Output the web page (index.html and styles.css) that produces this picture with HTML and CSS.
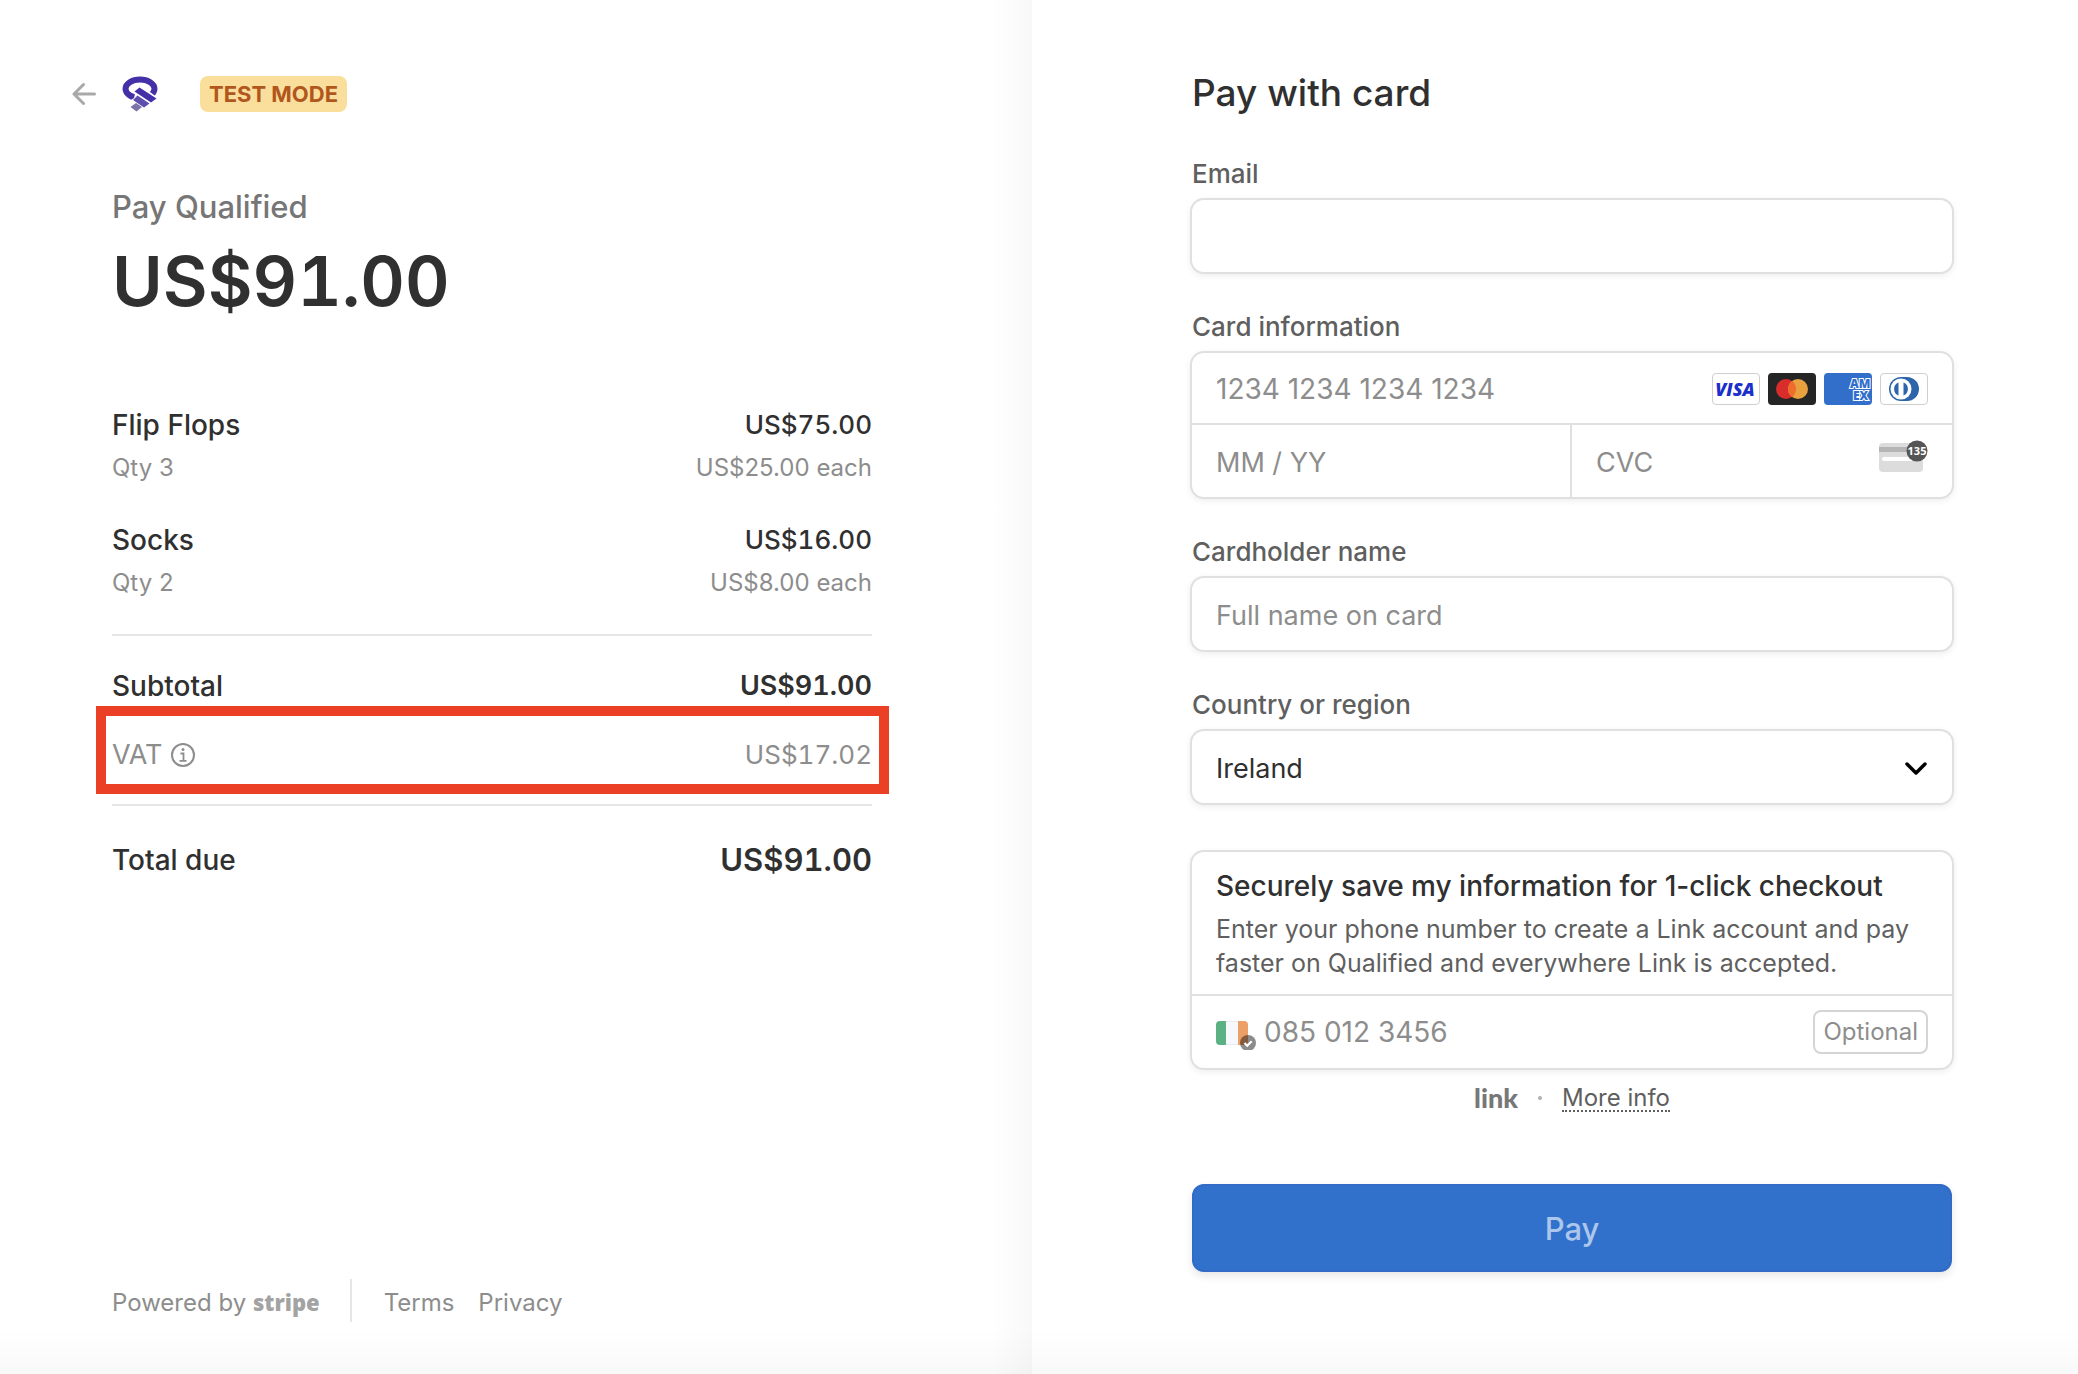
FILE: index.html
```html
<!DOCTYPE html>
<html lang="en">
<head>
    <meta charset="utf-8" />
    <meta name="viewport" content="width=device-width, initial-scale=1.0" />
    <title>Qualified - Checkout</title>
    <link rel="stylesheet" href="styles.css">
</head>
<body>
    <div class="checkout">
        <!-- Order summary -->
        <section class="summary">
            <header class="summary-header">
                <a href="#" class="back-link" aria-label="Back">
                    <svg width="24" height="24" viewBox="0 0 24 24" fill="none" stroke="#a9a9a9" stroke-width="3" stroke-linecap="round" stroke-linejoin="round">
                        <path d="M22.500 12H2M11.500 2.500L2 12l9.500 9.500" />
                    </svg>
                </a>
                <svg class="brand" width="36" height="36" viewBox="0 0 36 36">
                    <ellipse cx="18" cy="12.800" rx="14.500" ry="9.300" fill="none" stroke="#4530a8" stroke-width="6" />
                    <path d="M12 22L15 10L20 10L36 22L36 38H4L9 24z" fill="#fff" />
                    <path d="M12.500 15.500L17.500 11.500L34.500 22.500L29 26.500z" fill="#4530a8" />
                    <path d="M11 24L15.500 19.500L27.500 27.500L22 31.500z" fill="#5e4fae" />
                    <path d="M8.500 31L14 27L20 31L14.500 35.500z" fill="#7c74a8" />
                </svg>
                <span class="test-badge">TEST MODE</span>
            </header>

            <div class="pay-to">Pay Qualified</div>
            <div class="amount">US$91.00</div>

            <ul class="items">
                <li class="item">
                    <div class="row"><span>Flip Flops</span><span class="price">US$75.00</span></div>
                    <div class="row row-sub"><span>Qty 3</span><span>US$25.00 each</span></div>
                </li>
                <li class="item">
                    <div class="row"><span>Socks</span><span class="price">US$16.00</span></div>
                    <div class="row row-sub"><span>Qty 2</span><span>US$8.00 each</span></div>
                </li>
            </ul>

            <div class="totals">
                <div class="row"><span>Subtotal</span><span class="price strong">US$91.00</span></div>
                <div class="row row-vat">
                    <span class="vat-label">VAT
                        <svg width="24" height="24" viewBox="0 0 24 24" fill="none" stroke="#8d8d8d" stroke-width="2">
                            <circle cx="12" cy="12" r="11" />
                            <path d="M9.500 10.500h3v7M8.500 17.800h7" stroke-width="1.800" />
                            <circle cx="12" cy="6.500" r="1.500" fill="#8d8d8d" stroke="none" />
                        </svg>
                    </span>
                    <span class="price">US$17.02</span>
                </div>
            </div>
            <div class="row row-total"><span>Total due</span><span class="total">US$91.00</span></div>

            <footer class="footer">
                <a href="#" class="powered">Powered by <b class="stripe">stripe</b></a>
                <nav class="footer-links">
                    <a href="#">Terms</a>
                    <a href="#">Privacy</a>
                </nav>
            </footer>
        </section>

        <!-- Payment form -->
        <main class="payment">
            <h1>Pay with card</h1>
            <form>
                <div class="form-group">
                    <label for="email">Email</label>
                    <div class="box"><input type="email" id="email" name="email"></div>
                </div>

                <div class="form-group">
                    <label for="cardNumber">Card information</label>
                    <div class="box">
                        <div class="field card-number">
                            <input type="text" id="cardNumber" class="digits" placeholder="1234 1234 1234 1234">
                            <div class="card-brands">
                                <svg width="48" height="32" viewBox="0 0 48 32">
                                    <rect x="0.500" y="0.500" width="47" height="31" rx="3.500" fill="#fff" stroke="#cfcfcf" />
                                    <text x="23" y="23" text-anchor="middle" font-family="Open Sans" font-size="18" font-weight="800" font-style="italic" fill="#1a2fcb">VISA</text>
                                </svg>
                                <svg width="48" height="32" viewBox="0 0 48 32">
                                    <rect width="48" height="32" rx="4" fill="#252525" />
                                    <circle cx="18" cy="16" r="10" fill="#d92d2b" />
                                    <circle cx="30" cy="16" r="10" fill="#e9a13f" />
                                    <path d="M24 8a10 10 0 0 1 0 16a10 10 0 0 1 0-16z" fill="#ee6c2d" />
                                </svg>
                                <svg width="48" height="32" viewBox="0 0 48 32">
                                    <rect width="48" height="32" rx="4" fill="#316fcb" />
                                    <g font-family="Open Sans" font-size="12" font-weight="800" fill="#316fcb" stroke="#fff" stroke-width="2" paint-order="stroke">
                                        <text x="26" y="15">AM</text>
                                        <text x="29" y="27">EX</text>
                                    </g>
                                </svg>
                                <svg width="48" height="32" viewBox="0 0 48 32">
                                    <rect x="0.500" y="0.500" width="47" height="31" rx="3.500" fill="#fff" stroke="#cfcfcf" />
                                    <path d="M21 4h6a12 12 0 0 1 0 24h-6a12 12 0 0 1 0-24z" fill="#2d65ab" />
                                    <circle cx="21" cy="16" r="10.500" fill="#fff" />
                                    <path d="M18.500 9.500v13a7 7 0 0 1 0-13zM23.500 9.500v13a7 7 0 0 0 0-13z" fill="#2d65ab" />
                                </svg>
                            </div>
                        </div>
                        <div class="split">
                            <div class="field"><input type="text" aria-label="Expiration" placeholder="MM / YY"></div>
                            <div class="field">
                                <input type="text" aria-label="CVC" placeholder="CVC">
                                <svg class="cvc-icon" width="49" height="32" viewBox="0 0 49 32">
                                    <rect y="3" width="44" height="29" rx="4" fill="#dcdcdc" />
                                    <rect y="7" width="44" height="5" fill="#b5b5b5" />
                                    <rect x="3" y="17" width="38" height="4" rx="2" fill="#fff" />
                                    <circle cx="38" cy="11" r="10.500" fill="#555" />
                                    <text x="38" y="15" text-anchor="middle" font-family="Open Sans" font-size="11" font-weight="700" fill="#fff">135</text>
                                </svg>
                            </div>
                        </div>
                    </div>
                </div>

                <div class="form-group">
                    <label for="name">Cardholder name</label>
                    <div class="box"><input type="text" id="name" placeholder="Full name on card"></div>
                </div>

                <div class="form-group">
                    <label for="country">Country or region</label>
                    <div class="box select-box">
                        <select id="country">
                            <option>Ireland</option>
                        </select>
                        <svg class="chevron" width="24" height="16" viewBox="0 0 24 16" fill="none" stroke="#000" stroke-width="3.500" stroke-linecap="round" stroke-linejoin="round">
                            <path d="M3 3l9 9l9-9" />
                        </svg>
                    </div>
                </div>

                <div class="box link-box">
                    <div class="link-text">
                        <h2>Securely save my information for 1-click checkout</h2>
                        <p>Enter your phone number to create a Link account and pay faster on Qualified and everywhere Link is accepted.</p>
                    </div>
                    <div class="field phone">
                        <svg class="flag" width="40" height="32" viewBox="0 0 40 32">
                            <rect x="0.500" y="3.500" width="31" height="23" rx="4" fill="#f6f8fb" stroke="#e8ebef" />
                            <path d="M10 3H4a4 4 0 0 0-4 4v16a4 4 0 0 0 4 4h6z" fill="#5bb184" />
                            <path d="M22 3h6a4 4 0 0 1 4 4v16a4 4 0 0 1-4 4h-6z" fill="#ec9f66" />
                            <circle cx="32" cy="25" r="8" fill="#1a1a1a" fill-opacity="0.500" />
                            <path d="M28.500 25l2.700 2.700l4.500-4.500" fill="none" stroke="#fff" stroke-width="2.200" />
                        </svg>
                        <input type="tel" class="digits" aria-label="Phone number" placeholder="085 012 3456">
                        <span class="optional">Optional</span>
                    </div>
                </div>
                <div class="link-info">
                    <span class="link-logo">link</span>
                    <span class="dot"></span>
                    <a href="#">More info</a>
                </div>

                <button type="submit" class="submit-btn">Pay</button>
            </form>
        </main>
    </div>
</body>
</html>
```
FILE: styles.css
```css
:root {
    --font-family: 'Inter', sans-serif;
    --font-color: #303030;
    --label-color: #5f5f5f;
    --grey: #8d8d8d;
    --line-color: #e6e6e6;
    --border-color: #e0e0e0;
    --button-color: #3171cc;
    --alert-color: #eb4025;
}

* {
    box-sizing: border-box;
}

body {
    margin: 0;
    font-family: var(--font-family);
    font-size: 28px;
    color: var(--font-color);
    background-color: #fff;
}

/* soft shade along the bottom of the window */
body::after {
    content: "";
    position: fixed;
    left: 0;
    right: 0;
    bottom: 0;
    height: 44px;
    background: linear-gradient(rgba(0, 0, 0, 0), rgba(0, 0, 0, 0.025));
    pointer-events: none;
}

a {
    color: inherit;
    text-decoration: none;
}

.checkout {
    display: grid;
    grid-template-columns: 1fr 1fr;
    min-height: 100vh;
    padding-right: 14px;
}

/* Summary */
.summary {
    display: flex;
    flex-direction: column;
    padding: 76px 160px 52px 112px;
    background: linear-gradient(to left, #f8f8f8, #fff 40px);
}

.summary-header {
    display: flex;
    align-items: center;
    height: 36px;
    margin-left: -40px;
}

.back-link svg {
    display: block;
}

.brand {
    margin-left: 26px;
}

.test-badge {
    margin-left: 42px;
    padding: 0 9px;
    border-radius: 8px;
    background-color: #fadf9c;
    color: #b1571d;
    font-size: 22px;
    font-weight: 700;
    line-height: 36px;
}

.pay-to {
    margin-top: 75px;
    color: #767676;
    font-size: 31px;
    font-weight: 500;
    line-height: 40px;
}

.amount {
    margin-top: 10px;
    font-size: 69px;
    font-weight: 600;
    font-variant-numeric: tabular-nums;
    line-height: 88px;
}

.items {
    display: flex;
    flex-direction: column;
    gap: 39px;
    margin: 82px 0 0;
    padding: 0 0 36px;
    list-style: none;
}

.row {
    display: flex;
    justify-content: space-between;
    align-items: center;
    font-weight: 500;
    line-height: 36px;
}

.row-sub {
    margin-top: 10px;
    color: var(--grey);
    font-size: 24px;
    font-weight: 400;
    line-height: 30px;
}

.price {
    font-size: 26px;
    font-variant-numeric: tabular-nums;
}

.strong {
    font-size: 27px;
    font-weight: 600;
}

.totals {
    padding: 32px 0 10px;
    border-top: 2px solid var(--line-color);
    border-bottom: 2px solid var(--line-color);
}

.row-vat {
    margin: 2px -17px 0 -16px;
    padding: 21px 7px 11px 6px;
    border: 10px solid var(--alert-color);
    color: var(--grey);
    font-weight: 400;
}

.vat-label {
    display: flex;
    align-items: center;
    gap: 8px;
    font-size: 27px;
}

.row-total {
    margin-top: 36px;
}

.total {
    font-size: 31px;
    font-weight: 600;
    font-variant-numeric: tabular-nums;
}

.footer {
    display: flex;
    align-items: center;
    margin-top: auto;
    color: var(--grey);
    font-size: 24px;
    line-height: 38px;
}

.footer a {
    padding-top: 4px;
}

.powered {
    padding-right: 30px;
    border-right: 2px solid var(--line-color);
}

.stripe {
    color: #a3a3a3;
    font-family: 'Open Sans', sans-serif;
    font-size: 22px;
    font-weight: 800;
}

.footer-links {
    display: flex;
    gap: 24px;
    margin-left: 32px;
}

/* Payment form */
.payment {
    padding: 71px 110px 80px 158px;
}

h1 {
    margin: 0 0 43px 2px;
    font-size: 37px;
    font-weight: 500;
    line-height: 44px;
}

.form-group {
    margin-bottom: 37px;
}

.form-group label {
    display: block;
    margin: 0 0 9px 2px;
    color: var(--label-color);
    font-size: 26px;
    font-weight: 500;
    line-height: 31px;
}

.box {
    border: 2px solid var(--border-color);
    border-radius: 14px;
    background-color: #fff;
    box-shadow: 0 2px 6px rgba(0, 0, 0, 0.07);
}

input,
select {
    display: block;
    width: 100%;
    min-width: 0;
    height: 72px;
    padding: 2px 24px 0;
    border: none;
    outline: none;
    background: none;
    color: var(--font-color);
    font-family: inherit;
    font-size: 27px;
    appearance: none;
}

input::placeholder {
    color: var(--grey);
    opacity: 1;
}

.digits {
    font-size: 28px;
}

.field {
    display: flex;
    align-items: center;
    padding-right: 24px;
}

.card-number {
    height: 70px;
}

.card-brands {
    display: flex;
    flex-shrink: 0;
    gap: 8px;
    margin-top: 2px;
}

.split {
    display: grid;
    grid-template-columns: 1fr 1fr;
    border-top: 2px solid var(--border-color);
}

.split .field:first-child {
    border-right: 2px solid var(--border-color);
}

.cvc-icon {
    flex-shrink: 0;
    margin-bottom: 10px;
}

.select-box {
    position: relative;
}

.chevron {
    position: absolute;
    top: 30px;
    right: 24px;
    pointer-events: none;
}

.link-box {
    margin-top: 45px;
}

.link-text {
    padding: 16px 24px 14px;
    border-bottom: 2px solid var(--border-color);
}

h2 {
    margin: 0 0 8px;
    font-size: 28px;
    font-weight: 500;
    line-height: 36px;
}

.link-text p {
    margin: 0;
    color: var(--label-color);
    font-size: 25px;
    line-height: 34px;
}

.phone {
    padding-left: 24px;
}

.phone input {
    padding: 0 8px;
}

.flag {
    flex-shrink: 0;
    margin-top: 4px;
}

.optional {
    padding: 0 8px;
    border: 2px solid #d5d5d5;
    border-radius: 8px;
    color: var(--grey);
    font-size: 24px;
    line-height: 40px;
}

.link-info {
    display: flex;
    justify-content: center;
    align-items: center;
    gap: 20px;
    margin-top: 12px;
    color: var(--label-color);
    font-size: 24px;
    line-height: 32px;
}

.link-info a {
    line-height: 25px;
    border-bottom: 2px dotted var(--label-color);
}

.link-logo {
    color: #777;
    font-family: 'Lato', sans-serif;
    font-size: 27px;
    font-weight: 900;
}

.dot {
    width: 4px;
    height: 4px;
    border-radius: 50%;
    background-color: #b0b0b0;
}

.submit-btn {
    display: block;
    width: calc(100% - 4px);
    height: 88px;
    margin: 70px 2px 0;
    border: none;
    border-radius: 12px;
    background-color: var(--button-color);
    box-shadow: inset 0 0 0 2px rgba(50, 80, 180, 0.2), 0 4px 8px rgba(0, 0, 0, 0.1);
    color: #adc6eb;
    font-family: inherit;
    font-size: 31px;
    font-weight: 500;
    cursor: pointer;
}
```
